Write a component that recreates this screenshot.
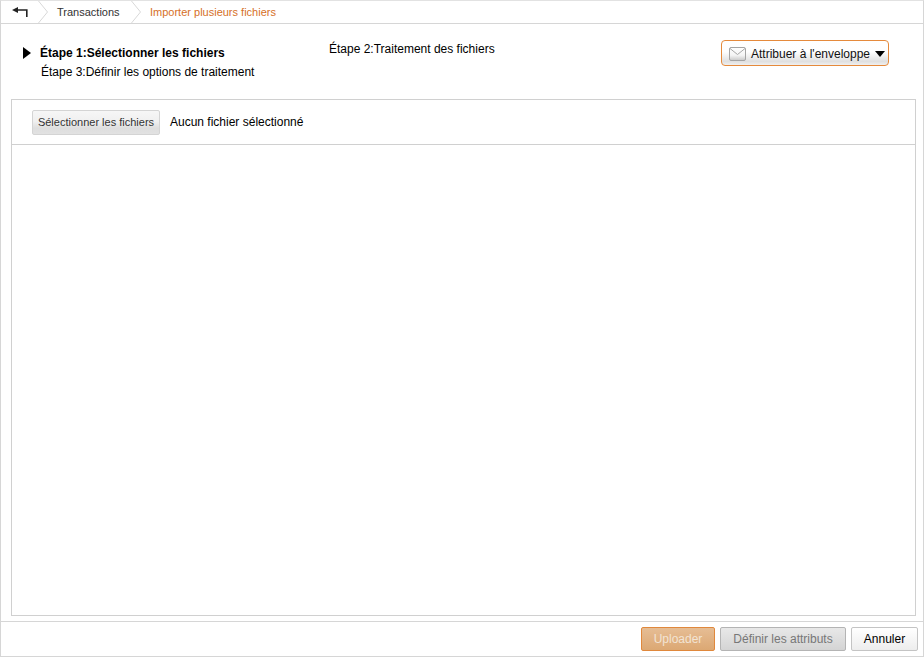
<script>
</script>

<div class="window">
  <header class="crumbs">
    <button class="back" aria-label="Retour">
      <svg width="16" height="10" viewBox="0 0 16 10"><path d="M0 3 L6 0 V2.2 H15.6 V10 H14 V3.8 H6 V6 Z" fill="#222"/></svg>
    </button>
    <svg class="chev" width="12" height="22" viewBox="0 0 12 22"><path d="M0.5 0 L9.5 11 L0.5 22" fill="none" stroke="#d8d8d8"/></svg>
    <span class="crumb">Transactions</span>
    <svg class="chev" width="12" height="22" viewBox="0 0 12 22"><path d="M0.5 0 L9.5 11 L0.5 22" fill="none" stroke="#d8d8d8"/></svg>
    <span class="crumb current">Importer plusieurs fichiers</span>
  </header>

  <section class="steps">
    <div class="step-list">
      <div class="row-one">
        <div class="active">
          <span class="arrow"></span>
          <strong>Étape 1:Sélectionner les fichiers</strong>
        </div>
        <div class="step-two">Étape 2:Traitement des fichiers</div>
      </div>
      <div class="step-three">Étape 3:Définir les options de traitement</div>
    </div>
    <button class="assign">
      <svg width="17" height="14" viewBox="0 0 17 14">
        <defs>
          <linearGradient id="env" x1="0" y1="0" x2="0" y2="1">
            <stop offset="0" stop-color="#ffffff"/><stop offset="0.6" stop-color="#f4f4f4"/><stop offset="1" stop-color="#c8c8c8"/>
          </linearGradient>
        </defs>
        <rect x="0.5" y="0.5" width="16" height="13" rx="1.5" fill="url(#env)" stroke="#a4a4a4"/>
        <path d="M1 1.5 L8.5 7.5 L16 1.5" fill="none" stroke="#a8a8a8"/>
      </svg>
      <span class="label">Attribuer à l'enveloppe</span>
      <span class="caret"></span>
    </button>
  </section>

  <section class="panel">
    <div class="file-row">
      <button class="select">Sélectionner les fichiers</button>
      <span class="none">Aucun fichier sélectionné</span>
    </div>
  </section>

  <footer class="actions">
    <button class="btn upload">Uploader</button>
    <button class="btn attrs">Définir les attributs</button>
    <button class="btn cancel">Annuler</button>
  </footer>
</div>

<style>
  :global(body) {
    margin: 0;
    background: #fff;
  }
  .window {
    box-sizing: border-box;
    width: 924px;
    height: 657px;
    border: 1px solid #d6d6d6;
    border-top-color: #e2e2e2;
    display: flex;
    flex-direction: column;
    font-family: "Liberation Sans", Arial, sans-serif;
    color: #000;
    background: #fff;
  }
  button {
    font-family: inherit;
    cursor: pointer;
    padding: 0;
  }
  .crumbs {
    height: 22px;
    flex: none;
    border-bottom: 1px solid #d6d6d6;
    display: flex;
    align-items: center;
    font-size: 11px;
  }
  .back {
    width: 37px;
    height: 22px;
    border: 0;
    background: none;
    display: flex;
    align-items: center;
    padding: 0 0 0 11px;
    box-sizing: border-box;
  }
  .chev {
    flex: none;
  }
  .crumb {
    color: #333;
    margin-left: 7px;
    width: 74px;
  }
  .crumb.current {
    color: #d6701f;
    width: auto;
  }
  .steps {
    flex: none;
    height: 75px;
    box-sizing: border-box;
    display: flex;
    justify-content: space-between;
    font-size: 12px;
  }
  .step-list {
    padding-top: 22px;
    width: 560px;
  }
  .row-one {
    display: flex;
  }
  .active {
    width: 328px;
    display: flex;
    align-items: center;
    padding-left: 22px;
    box-sizing: border-box;
    height: 14px;
  }
  .arrow {
    width: 0;
    height: 0;
    border-left: 8px solid #000;
    border-top: 6px solid transparent;
    border-bottom: 6px solid transparent;
    margin-right: 9px;
  }
  .active strong {
    font-size: 12px;
  }
  .step-two {
    margin-top: -4px;
    line-height: 14px;
  }
  .step-three {
    margin: 5px 0 0 40px;
    line-height: 14px;
  }
  .assign {
    width: 168px;
    height: 26px;
    margin: 16px 34px 0 0;
    border: 1px solid #e58a3c;
    border-radius: 4px;
    background: linear-gradient(#fff 0%, #fefefe 45%, #e0e0e0 85%, #f0f0f0 100%);
    display: flex;
    align-items: center;
    font-size: 12px;
    color: #111;
    padding: 2px 0 0 7px;
    box-sizing: border-box;
  }
  .label {
    margin-left: 5px;
  }
  .caret {
    width: 0;
    height: 0;
    margin-left: 5px;
    border-top: 6px solid #000;
    border-left: 5.5px solid transparent;
    border-right: 5.5px solid transparent;
  }
  .panel {
    flex: 1;
    margin: 0 7px 5px 10px;
    border: 1px solid #d0d0d0;
    min-height: 0;
  }
  .file-row {
    height: 44px;
    border-bottom: 1px solid #d0d0d0;
    display: flex;
    align-items: center;
    padding-left: 20px;
    font-size: 12px;
  }
  .select {
    width: 128px;
    height: 25px;
    border: 1px solid #d4d4d4;
    border-radius: 2px;
    background: linear-gradient(#f6f6f6 0%, #f0f0f0 45%, #dedede 75%, #e2e2e2 100%);
    font-size: 11px;
    color: #333;
  }
  .none {
    margin-left: 10px;
  }
  .actions {
    flex: none;
    height: 35px;
    box-sizing: border-box;
    border-top: 1px solid #d6d6d6;
    display: flex;
    justify-content: flex-end;
    align-items: center;
    gap: 5px;
    padding: 0 5px 0 0;
  }
  .btn {
    height: 24px;
    border-radius: 2px;
    font-size: 12px;
    box-sizing: border-box;
  }
  .upload {
    width: 74px;
    border: 1px solid #e0883c;
    background: linear-gradient(#e6bd94, #dca873);
    color: #f2e4d4;
  }
  .attrs {
    width: 126px;
    border: 1px solid #b4b4b4;
    background: linear-gradient(#e8e8e8, #d4d4d4);
    color: #777;
  }
  .cancel {
    width: 67px;
    border: 1px solid #c4c4c4;
    background: linear-gradient(#fff, #ededed);
    color: #000;
  }
</style>
